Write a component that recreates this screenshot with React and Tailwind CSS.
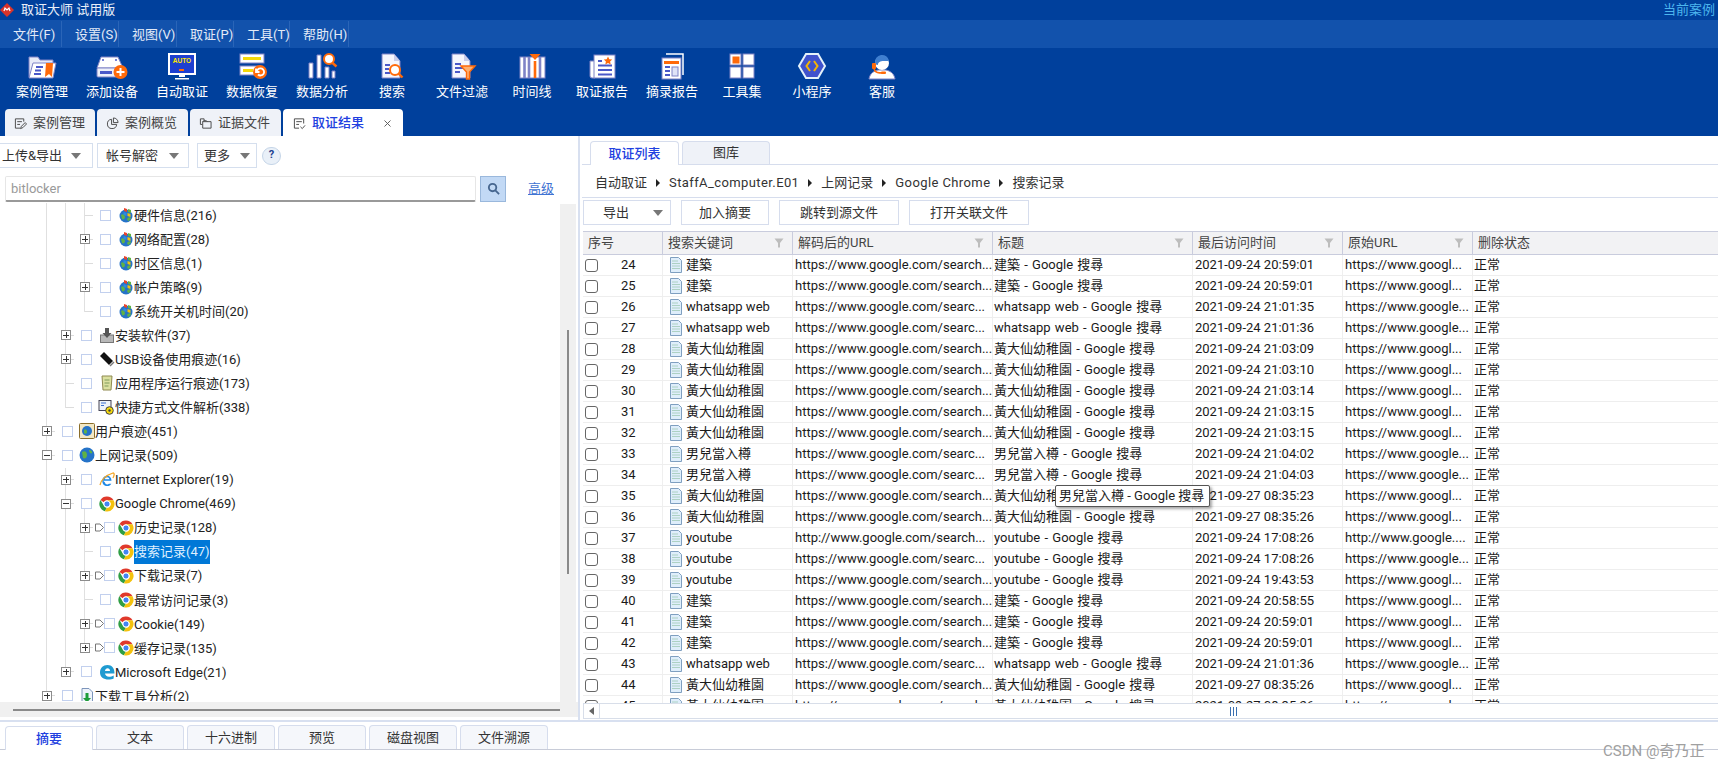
import {X} from 'lucide-react';

const BLUE = '#4a58c8';
const LINE = '#7f83c6';
const ORANGE = '#ff6a0a';

/* toolbar icons, drawn to roughly match the originals */
const toolIcons = {
  folder: (
    <>
      <path d="M3 4h9l2 3h13v17H3z" fill="#e8ebf8" stroke={LINE} />
      <path d="M7 10h23l-3 15H3z" fill="#fff" stroke={LINE} />
      <path d="M10 14h7M9 17.500h6M8 21h7" stroke={BLUE} strokeWidth="2" />
      <path d="M20 10h7l-1 14-3-3-4 3z" fill={ORANGE} />
    </>
  ),
  disk: (
    <>
      <path d="M5 4h17l5 11H1z" fill="#fff" stroke={LINE} />
      <rect x="1" y="15" width="24" height="9" rx="1" fill="#eef0fa" stroke={LINE} />
      <rect x="4" y="18" width="12" height="3" fill={BLUE} />
      <circle cx="7" cy="7" r="1" fill={BLUE} /><circle cx="20" cy="7" r="1" fill={BLUE} />
      <circle cx="24.500" cy="19" r="7" fill={ORANGE} />
      <path d="M24.500 15v8M20.500 19h8" stroke="#fff" strokeWidth="2" />
    </>
  ),
  auto: (
    <>
      <rect x="3" y="1" width="26" height="20" fill="#1d3fd0" stroke="#fff" strokeWidth="2" />
      <text x="16" y="10" textAnchor="middle" fontSize="6.500" fontWeight="700" fill="#ffe600" fontFamily="Liberation Sans, sans-serif">AUTO</text>
      <rect x="13" y="16" width="5" height="2" fill={ORANGE} />
      <path d="M13 22h6v2h-6zM9 25h14v1.500H9z" fill="#fff" />
    </>
  ),
  restore: (
    <>
      <rect x="4" y="1" width="24" height="9" fill="#fff" stroke={LINE} />
      <rect x="7" y="4" width="18" height="3" fill="#f5d90a" />
      <rect x="4" y="13" width="20" height="9" fill="#fff" stroke={LINE} />
      <rect x="7" y="16" width="10" height="3" fill="#f5d90a" />
      <circle cx="24" cy="19" r="7" fill={ORANGE} />
      <path d="M21 18a3.600 3.600 0 1 1 1 3.500M20 15.500v3.500h3.500" fill="none" stroke="#fff" strokeWidth="1.800" />
    </>
  ),
  analysis: (
    <>
      <path d="M3 10h4v15H3zM11 2h4v23h-4zM19 14h4v11h-4zM26 18h3v7h-3z" fill="#fff" stroke={LINE} />
      <circle cx="23" cy="6" r="5" fill="#fff" stroke={ORANGE} strokeWidth="2" />
      <path d="M26.500 10l4 3.500" stroke={ORANGE} strokeWidth="2.400" />
    </>
  ),
  searchDoc: (
    <>
      <path d="M6 1h12l6 7v17H6z" fill="#f5f6fd" stroke={LINE} />
      <path d="M18 1v7h6z" fill="#c9cdea" />
      <path d="M9 12h5M9 16h4M9 20h5" stroke={BLUE} strokeWidth="2" />
      <circle cx="19" cy="17" r="5" fill="#fff" stroke={ORANGE} strokeWidth="2" />
      <path d="M22.500 20.500l4 4" stroke={ORANGE} strokeWidth="2.400" />
    </>
  ),
  filterDoc: (
    <>
      <path d="M6 1h12l6 7v17H6z" fill="#f5f6fd" stroke={LINE} />
      <path d="M18 1v7h6z" fill="#c9cdea" />
      <path d="M9 11h6M9 15h9M9 19h5" stroke={BLUE} strokeWidth="2" />
      <path d="M15 13h14l-5.500 6v7h-3v-7z" fill="#ffb070" stroke={ORANGE} strokeWidth="1.400" />
    </>
  ),
  timeline: (
    <>
      <rect x="4" y="4" width="25" height="21" fill="#fff" stroke={LINE} />
      <path d="M8.500 4v21M13 4v21M24 4v21" stroke={LINE} strokeWidth="2.600" />
      <path d="M19 8v17" stroke={ORANGE} strokeWidth="2.600" />
      <path d="M13.500 1h11l-5.500 6z" fill={ORANGE} />
    </>
  ),
  report: (
    <>
      <path d="M4 8h5v17H6a2 2 0 0 1-2-2z" fill="#fff" stroke={LINE} />
      <rect x="8" y="2" width="21" height="23" fill="#fff" stroke={LINE} />
      <path d="M12 8h4M12 12.500h14M12 17h14M12 21.500h14" stroke={BLUE} strokeWidth="2" />
      <path d="M22 3.500l1.300 2.700 2.900.3-2.100 2 .6 2.900-2.700-1.400-2.700 1.400.6-2.900-2.100-2 2.900-.3z" fill={ORANGE} />
    </>
  ),
  extract: (
    <>
      <path d="M10 1h17v21" fill="none" stroke="#fff" strokeWidth="1.500" />
      <rect x="6" y="5" width="19" height="21" fill="#fff" stroke={LINE} />
      <rect x="8" y="8" width="15" height="3" fill={ORANGE} />
      <path d="M9 14h5M9 18h5M9 22h5" stroke={BLUE} strokeWidth="1.800" />
      <rect x="16" y="14" width="6" height="9" fill="#dfe3f7" stroke={LINE} />
    </>
  ),
  grid: (
    <>
      <rect x="4" y="1" width="11" height="11" fill="#fff" stroke={LINE} />
      <rect x="6.500" y="3.500" width="7" height="7" fill={ORANGE} />
      <rect x="17" y="1" width="11" height="11" fill="#fff" stroke={LINE} />
      <rect x="4" y="14" width="11" height="11" fill="#fff" stroke={LINE} />
      <rect x="17" y="14" width="11" height="11" fill="#fff" stroke={LINE} />
    </>
  ),
  hex: (
    <>
      <path d="M10 1h12l7 12-7 12H10L3 13z" fill="#3f52cc" stroke="#e4f2fa" strokeWidth="2" />
      <path d="M14 8l-3.500 5 3.500 5M18 8l3.500 5-3.500 5" fill="none" stroke="#f5b400" strokeWidth="2" />
    </>
  ),
  agent: (
    <>
      <path d="M3 26c1-6 5-8 9-9h8c4 1 8 3 9 9z" fill="#fff" stroke={LINE} />
      <circle cx="16" cy="10" r="7" fill="#fff" />
      <path d="M9 10a7 7 0 0 1 14-2c-4 0-10-1-11 3 0 1-1 2-3-1z" fill="#3f7fd0" />
      <rect x="6" y="10" width="4" height="6" rx="1" fill={ORANGE} />
      <path d="M8 16c1 4 5 4 9 4" fill="none" stroke={ORANGE} strokeWidth="1.500" />
      <rect x="15" y="18.500" width="5" height="2.500" rx="1" fill={ORANGE} />
    </>
  ),
};

const tools = [
  ['folder', '案例管理'], ['disk', '添加设备'], ['auto', '自动取证'], ['restore', '数据恢复'],
  ['analysis', '数据分析'], ['searchDoc', '搜索'], ['filterDoc', '文件过滤'], ['timeline', '时间线'],
  ['report', '取证报告'], ['extract', '摘录报告'], ['grid', '工具集'], ['hex', '小程序'], ['agent', '客服'],
];

const menus = [
  ['文件(F)', 'w-[62px]'], ['设置(S)', 'w-[57px]'], ['视图(V)', 'w-[58px]'],
  ['取证(P)', 'w-[57px]'], ['工具(T)', 'w-[56px]'], ['帮助(H)', 'w-[59px]'],
];

function ChromeIcon() {
  return (
    <svg viewBox="0 0 16 16" className="w-4 h-4 shrink-0">
      <path d="M8 0.500a7.500 7.500 0 0 1 6.500 3.750H8a3.750 3.750 0 0 0-3.250 1.900L1.500 3.900A7.500 7.500 0 0 1 8 0.500z" fill="#e0392b" />
      <path d="M1.500 3.900l3.250 5.600A3.750 3.750 0 0 0 8 11.750l-2.200 3.400A7.500 7.500 0 0 1 1.500 3.900z" fill="#2f9e44" />
      <path d="M14.500 4.250A7.500 7.500 0 0 1 5.800 15.150L8 11.750a3.750 3.750 0 0 0 3.250-5.600L8 4.250z" fill="#f4c20d" />
      <circle cx="8" cy="8" r="3.100" fill="#4285f4" stroke="#fff" />
    </svg>
  );
}

function WinGlobe() {
  return (
    <svg viewBox="0 0 16 16" className="w-4 h-4 shrink-0">
      <circle cx="8" cy="9" r="6.500" fill="#2573c8" />
      <path d="M3 8c2-2 4 0 4 2s-2 3-3 2zM9 12c1-2 4-2 4-1s-2 3-3 3z" fill="#5fb246" />
      <path d="M6 1l3 1v3L6 4z" fill="#e8452c" /><path d="M10 2l3 1v3l-3-1z" fill="#5fb246" />
      <path d="M5.500 5l3 1v3l-3-1z" fill="#2f8be0" /><path d="M9.500 6l3 1v3l-3-1z" fill="#f4c20d" />
    </svg>
  );
}

function treeIcon(kind) {
  switch (kind) {
    case 'win': return <WinGlobe />;
    case 'chrome': return <ChromeIcon />;
    case 'install':
      return (
        <svg viewBox="0 0 16 16" className="w-4 h-4 shrink-0">
          <rect x="1.500" y="8" width="13" height="7.500" fill="#b8b8b8" stroke="#777" />
          <path d="M6 1h4v5h2.500L8 11 3.500 6H6z" fill="#555" />
        </svg>
      );
    case 'usb':
      return (
        <svg viewBox="0 0 16 16" className="w-4 h-4 shrink-0">
          <path d="M1 5l4-4 9 9-4 4z" fill="#111" />
          <path d="M10.500 14.500l4-4 1 1-4 4z" fill="#777" />
        </svg>
      );
    case 'app':
      return (
        <svg viewBox="0 0 16 16" className="w-4 h-4 shrink-0">
          <path d="M3 1h10l-1 14H4z" fill="#dbe0a0" stroke="#8f8a50" />
          <path d="M5.500 5h5M5.500 8h5M5.500 11h4" stroke="#7f9a5a" />
        </svg>
      );
    case 'shortcut':
      return (
        <svg viewBox="0 0 16 16" className="w-[17px] h-4 shrink-0">
          <rect x="0.500" y="1.500" width="12" height="10" fill="#eef2f8" stroke="#445" />
          <path d="M2.500 4h5M2.500 6.500h3" stroke="#3a6fd0" />
          <circle cx="11" cy="11.500" r="3.800" fill="#f5d90a" stroke="#444" />
          <circle cx="11" cy="11.500" r="1.200" fill="#444" />
        </svg>
      );
    case 'user':
      return (
        <svg viewBox="0 0 16 16" className="w-4 h-4 shrink-0">
          <rect x="0.500" y="0.500" width="15" height="15" rx="1" fill="#f2e7c4" stroke="#8a6d2a" />
          <circle cx="8" cy="8" r="5" fill="#2573c8" />
          <path d="M5 7c2-2 3 0 3 2s-2 2-3 1z" fill="#5fb246" />
        </svg>
      );
    case 'globe':
      return (
        <svg viewBox="0 0 16 16" className="w-4 h-4 shrink-0">
          <circle cx="8" cy="8" r="7.500" fill="#2573c8" />
          <path d="M3 5c3-2 5 0 5 3s-2 4-4 3zM10 3c2 0 4 2 3 3s-3 0-3-3z" fill="#5fb246" />
        </svg>
      );
    case 'ie':
      return (
        <svg viewBox="0 0 16 16" className="w-4 h-4 shrink-0">
          <path d="M4 8.800h8.500c0-3-1.800-5-4.300-5C5.400 3.800 3.300 6 3.300 9c0 3 2 5 4.900 5 1.900 0 3.300-.8 4.100-2.300H9.900c-.4.500-1 .8-1.700.8-1.300 0-2.200-1-2.400-2.200M5.800 7.200c.2-1.100 1.200-1.900 2.400-1.900s2.100.8 2.300 1.900z" fill="#1e88e5" fillRule="evenodd" />
          <path d="M1 13C2 8 7 3 14 1c2 0 1 3 0 5" fill="none" stroke="#f5a623" strokeWidth="1.300" />
        </svg>
      );
    case 'edge':
      return (
        <svg viewBox="0 0 16 16" className="w-4 h-4 shrink-0">
          <path d="M1 8.500C1 4 4 1 8.500 1 13 1 15.500 4 15.500 9.500H6c.2 2 1.800 3.200 4 3.200 1.800 0 3.300-.5 4.700-1.300v3.100c-1.500.8-3.200 1.100-5 1.100C4.500 15.600 1 13 1 8.500zM6 7h5c0-1.600-1-2.700-2.400-2.700C7.200 4.300 6.200 5.400 6 7z" fill="#1f9bd1" fillRule="evenodd" />
        </svg>
      );
    case 'download':
      return (
        <svg viewBox="0 0 16 16" className="w-4 h-4 shrink-0">
          <path d="M3 0.500h7l3.500 3.500v11.500H3z" fill="#eef3fb" stroke="#7d95bb" />
          <path d="M6.500 5h3v5H12l-4 4.500L4 10h2.500z" fill="#1f9d3a" />
        </svg>
      );
    default: return null;
  }
}

function PlusBox({minus}) {
  return (
    <span className="relative w-[10px] h-[10px] border border-[#8c8c8c] bg-white shrink-0 flex items-center justify-center">
      <span className="w-[6px] h-px bg-[#333]" />
      {!minus && <span className="absolute w-px h-[6px] bg-[#333]" />}
    </span>
  );
}

/* level: indent depth, exp: none / plus / minus, tri: hollow arrow before the checkbox */
const treeRows = [
  {level: 2, icon: 'win', label: '硬件信息(216)'},
  {level: 2, icon: 'win', label: '网络配置(28)', exp: 'plus'},
  {level: 2, icon: 'win', label: '时区信息(1)'},
  {level: 2, icon: 'win', label: '帐户策略(9)', exp: 'plus'},
  {level: 2, icon: 'win', label: '系统开关机时间(20)'},
  {level: 1, icon: 'install', label: '安装软件(37)', exp: 'plus'},
  {level: 1, icon: 'usb', label: 'USB设备使用痕迹(16)', exp: 'plus'},
  {level: 1, icon: 'app', label: '应用程序运行痕迹(173)'},
  {level: 1, icon: 'shortcut', label: '快捷方式文件解析(338)'},
  {level: 0, icon: 'user', label: '用户痕迹(451)', exp: 'plus'},
  {level: 0, icon: 'globe', label: '上网记录(509)', exp: 'minus'},
  {level: 1, icon: 'ie', label: 'Internet Explorer(19)', exp: 'plus'},
  {level: 1, icon: 'chrome', label: 'Google Chrome(469)', exp: 'minus'},
  {level: 2, icon: 'chrome', label: '历史记录(128)', exp: 'plus', tri: true},
  {level: 2, icon: 'chrome', label: '搜索记录(47)', selected: true},
  {level: 2, icon: 'chrome', label: '下载记录(7)', exp: 'plus', tri: true},
  {level: 2, icon: 'chrome', label: '最常访问记录(3)'},
  {level: 2, icon: 'chrome', label: 'Cookie(149)', exp: 'plus', tri: true},
  {level: 2, icon: 'chrome', label: '缓存记录(135)', exp: 'plus', tri: true},
  {level: 1, icon: 'edge', label: 'Microsoft Edge(21)', exp: 'plus'},
  {level: 0, icon: 'download', label: '下载工具分析(2)', exp: 'plus'},
];

const indentClass = ['w-[42px]', 'w-[61px]', 'w-[80px]'];

function TreeRow({row}) {
  return (
    <div className="flex items-center h-[24.05px] relative">
      <span className={`${indentClass[row.level]} shrink-0`} />
      <span className="w-[10px] shrink-0 flex items-center">
        {row.exp ? <PlusBox minus={row.exp === 'minus'} /> : <span className="w-[8px] h-px bg-[#dcdcdc] ml-[5px] shrink-0" />}
      </span>
      {row.exp && <span className="w-[3px] h-px bg-[#dcdcdc] shrink-0" />}
      {row.tri ? (
        <>
          <svg viewBox="0 0 9 9" className="w-[9px] h-[9px] ml-[2px] shrink-0">
            <path d="M0.500 1h4.500l3.500 3.500-3.500 3.500H0.500z" fill="#fff" stroke="#777" />
          </svg>
          <span className="w-[11px] h-[11px] border border-[#c2d0ee] bg-white shrink-0" />
        </>
      ) : (
        <span className={`w-[11px] h-[11px] border border-[#c2d0ee] bg-white shrink-0 ${row.exp ? 'ml-[7px]' : 'ml-[10px]'}`} />
      )}
      <span className={`flex items-center justify-center shrink-0 w-[17px] ${row.tri ? 'ml-[2px]' : row.level === 0 ? 'ml-[5px]' : 'ml-[6px]'}`}>{treeIcon(row.icon)}</span>
      <span className={`whitespace-nowrap h-6 pt-px flex items-center text-[13px] ${row.selected ? 'bg-[#0078d7] text-[#dff0ff]' : 'text-[#222]'}`}>{row.label}</span>
    </div>
  );
}

function FilterMark() {
  return (
    <svg viewBox="0 0 10 10" className="w-[10px] h-[10px] shrink-0">
      <path d="M0.500 0.500h9L6 5v4.500H4V5z" fill="#bdbdbd" />
    </svg>
  );
}

function DocIcon() {
  return (
    <svg viewBox="0 0 14 16" className="w-[14px] h-[16px] shrink-0">
      <path d="M1.500 0.500h8l3 3v12h-11z" fill="#dfeefb" stroke="#7f9fc0" />
      <path d="M3.500 4h5M3.500 6.500h7M3.500 9h7M3.500 11.500h7" stroke="#7ab48a" strokeDasharray="1 1" />
    </svg>
  );
}

const columns = [
  {title: '序号', w: 'w-[80px]'},
  {title: '搜索关键词', w: 'w-[130px]', filter: true},
  {title: '解码后的URL', w: 'w-[200px]', filter: true},
  {title: '标题', w: 'w-[200px]', filter: true},
  {title: '最后访问时间', w: 'w-[150px]', filter: true},
  {title: '原始URL', w: 'w-[130px]', filter: true},
  {title: '删除状态', w: 'flex-1'},
];

const S = 'https://www.google.com/search...';
const C = 'https://www.google.com/searc...';
const G = 'https://www.googl...';
const E = 'https://www.google...';
const records = [
  [24, '建築', S, '建築 - Google 搜尋', '2021-09-24 20:59:01', G],
  [25, '建築', S, '建築 - Google 搜尋', '2021-09-24 20:59:01', G],
  [26, 'whatsapp web', C, 'whatsapp web - Google 搜尋', '2021-09-24 21:01:35', E],
  [27, 'whatsapp web', C, 'whatsapp web - Google 搜尋', '2021-09-24 21:01:36', E],
  [28, '黃大仙幼稚園', S, '黃大仙幼稚園 - Google 搜尋', '2021-09-24 21:03:09', G],
  [29, '黃大仙幼稚園', S, '黃大仙幼稚園 - Google 搜尋', '2021-09-24 21:03:10', G],
  [30, '黃大仙幼稚園', S, '黃大仙幼稚園 - Google 搜尋', '2021-09-24 21:03:14', G],
  [31, '黃大仙幼稚園', S, '黃大仙幼稚園 - Google 搜尋', '2021-09-24 21:03:15', G],
  [32, '黃大仙幼稚園', S, '黃大仙幼稚園 - Google 搜尋', '2021-09-24 21:03:15', G],
  [33, '男兒當入樽', C, '男兒當入樽 - Google 搜尋', '2021-09-24 21:04:02', E],
  [34, '男兒當入樽', C, '男兒當入樽 - Google 搜尋', '2021-09-24 21:04:03', E],
  [35, '黃大仙幼稚園', S, '黃大仙幼稚園 - Google 搜尋', '2021-09-27 08:35:23', G],
  [36, '黃大仙幼稚園', S, '黃大仙幼稚園 - Google 搜尋', '2021-09-27 08:35:26', G],
  [37, 'youtube', 'http://www.google.com/search...', 'youtube - Google 搜尋', '2021-09-24 17:08:26', 'http://www.google....'],
  [38, 'youtube', C, 'youtube - Google 搜尋', '2021-09-24 17:08:26', E],
  [39, 'youtube', S, 'youtube - Google 搜尋', '2021-09-24 19:43:53', G],
  [40, '建築', S, '建築 - Google 搜尋', '2021-09-24 20:58:55', G],
  [41, '建築', S, '建築 - Google 搜尋', '2021-09-24 20:59:01', G],
  [42, '建築', S, '建築 - Google 搜尋', '2021-09-24 20:59:01', G],
  [43, 'whatsapp web', C, 'whatsapp web - Google 搜尋', '2021-09-24 21:01:36', E],
  [44, '黃大仙幼稚園', S, '黃大仙幼稚園 - Google 搜尋', '2021-09-27 08:35:26', G],
  [45, '黃大仙幼稚園', S, '黃大仙幼稚園 - Google 搜尋', '2021-09-27 08:35:26', G],
];

function RecordRow({r}) {
  const cell = 'h-full border-r border-[#efefef] flex items-center whitespace-nowrap overflow-hidden shrink-0';
  return (
    <div className="flex h-[21px] border-b border-[#eeeeee] text-[13px] text-[#1a1a1a] shrink-0">
      <div className={`${cell} w-[80px] pl-[2px]`}>
        <span className="w-[13px] h-[13px] rounded-[3px] border border-[#666] bg-white shrink-0" />
        <span className="ml-[23px]">{r[0]}</span>
      </div>
      <div className={`${cell} w-[130px] pl-[6px]`}>
        <DocIcon />
        <span className="ml-[3px]">{r[1]}</span>
      </div>
      <div className={`${cell} w-[200px] pl-[2px]`}>{r[2]}</div>
      <div className={`${cell} w-[200px] pl-[1px] [word-spacing:1px]`}>{r[3]}</div>
      <div className={`${cell} w-[150px] pl-[2px]`}>{r[4]}</div>
      <div className={`${cell} w-[130px] pl-[2px]`}>{r[5]}</div>
      <div className="flex items-center pl-[1px]">正常</div>
    </div>
  );
}

function Caret({className = ''}) {
  return <span className={`w-0 h-0 border-x-[5px] border-x-transparent border-t-[6px] border-t-[#777] shrink-0 ${className}`} />;
}

const bottomTabs = ['摘要', '文本', '十六进制', '预览', '磁盘视图', '文件溯源'];

export default function App() {
  return (
    <div className="w-[1718px] h-[766px] overflow-hidden bg-white flex flex-col relative [font-family:'Roboto','Noto_Sans_CJK_SC',sans-serif]">
      {/* Title bar */}
      <div className="h-5 bg-[#00409c] flex items-center justify-between shrink-0">
        <div className="flex items-center">
          <svg viewBox="0 0 14 14" className="w-[14px] h-[14px]">
            <path d="M7 0l7 7-7 7-7-7z" fill="#d8332a" />
            <path d="M4 8l1-3 2 2 2-2 1 3" fill="none" stroke="#fff" strokeWidth="1.200" />
          </svg>
          <span className="ml-[7px] text-[13px] leading-5 text-[#e8eef8]">取证大师 试用版</span>
        </div>
        <span className="mr-[3px] text-[13px] leading-5 text-[#4cb6ee]">当前案例</span>
      </div>

      {/* Menu */}
      <div className="h-7 bg-[#1252ac] flex shrink-0 items-center">
        {menus.map(([text, w]) => (
          <div key={text} className={`${w} h-[26px] pl-[13px] pt-px border-r border-[#2a65b8] flex items-center text-[13px] text-[#e2eaf7] whitespace-nowrap`}>
            {text}
          </div>
        ))}
      </div>

      {/* Toolbar */}
      <div className="h-[61px] bg-[#00409c] flex pl-[7px] pt-[5px] shrink-0">
        {tools.map(([icon, label]) => (
          <div key={label} className="w-[70px] flex flex-col items-center">
            <svg viewBox="0 0 32 28" className="w-8 h-7">{toolIcons[icon]}</svg>
            <span className="mt-[2px] text-[13px] leading-[18px] text-white whitespace-nowrap">{label}</span>
          </div>
        ))}
      </div>

      {/* Page tabs */}
      <div className="h-[27px] bg-[#00409c] flex items-end pl-[5px] gap-[2px] shrink-0 text-[13px]">
        {[['案例管理', 'w-[90px]', 'edit'], ['案例概览', 'w-[91px]', 'pie'], ['证据文件', 'w-[91px]', 'files']].map(([text, w, kind]) => (
          <div key={text} className={`${w} h-[27px] pt-px bg-[#eff2f8] rounded-t-[4px] flex items-center pl-[9px] text-[#444]`}>
            <svg viewBox="0 0 14 14" className="w-[13px] h-[13px] mr-[6px]" fill="none" stroke="#444">
              {kind === 'edit' && <path d="M1.500 2h9v3M1.500 2v10h5M3.500 5h5M3.500 8h3M7 12.500l1-2.500 4-4 1.500 1.500-4 4z" />}
              {kind === 'pie' && <path d="M6 2.500a5 5 0 1 0 5.500 5.500H6zM8 1a5 5 0 0 1 5 5H8z" />}
              {kind === 'files' && <path d="M1.500 2h4v2M1.500 2v6h2M4 5h9v7H4zM4 5l1-1h3l1 1" />}
            </svg>
            {text}
          </div>
        ))}
        <div className="w-[120px] h-[27px] pt-px bg-white rounded-t-[4px] flex items-center pl-[10px] text-[#2140e0] font-medium">
          <svg viewBox="0 0 14 14" className="w-[13px] h-[13px] mr-[6px]" fill="none" stroke="#444">
            <path d="M1.500 2h10v5M1.500 2v10h5M3.500 5h6M3.500 8h3M8 10.500l2 2 3-3.500" />
          </svg>
          取证结果
          <X className="w-[11px] h-[11px] ml-[18px] text-[#555]" strokeWidth={2} />
        </div>
      </div>

      {/* Main */}
      <div className="h-[584px] flex shrink-0">
        {/* Left panel */}
        <div className="w-[578px] flex flex-col shrink-0 text-[13px]">
          <div className="flex items-center pt-[7px] h-[32px] shrink-0 text-[#333]">
            <div className="w-[93px] h-[25px] pt-px border border-l-0 border-[#d5dfee] flex items-center pl-[2px] whitespace-nowrap">
              上传&导出<Caret className="ml-[9px]" />
            </div>
            <div className="w-[92px] h-[25px] pt-px ml-[4px] border border-[#d5dfee] flex items-center pl-[8px] whitespace-nowrap">
              帐号解密<Caret className="ml-[11px]" />
            </div>
            <div className="w-[60px] h-[25px] pt-px ml-[8px] border border-[#d5dfee] flex items-center pl-[6px] whitespace-nowrap">
              更多<Caret className="ml-[10px]" />
            </div>
            <div className="w-[19px] h-[18px] ml-[5px] rounded-full bg-[#e9f0f8] border border-[#c5d5e8] flex items-center justify-center text-[11px] font-bold text-[#1d3f8f]">?</div>
          </div>
          <div className="flex items-center pl-[5px] mt-[7px] h-[27px] shrink-0">
            <div className="w-[471px] h-[26px] pt-px border border-[#e6e6e6] border-b-2 border-b-[#999] rounded-[2px] flex items-center pl-[5px] text-[#9a9a9a]">bitlocker</div>
            <div className="w-[26px] h-[26px] ml-[4px] bg-[#c2d9f5] border border-[#9ab8dc] flex items-center justify-center">
              <svg viewBox="0 0 14 14" className="w-[13px] h-[13px]" fill="none" stroke="#46668f" strokeWidth="2">
                <circle cx="6" cy="6" r="4" /><path d="M9 9l4 4" />
              </svg>
            </div>
            <span className="ml-[22px] text-[#3f73d2] underline">高级</span>
          </div>
          <div className="h-[498px] mt-[1px] flex shrink-0">
            {/* Tree */}
            <div className="w-[560px] h-full relative overflow-hidden shrink-0">
              <span className="absolute left-[46px] top-0 bottom-0 w-px bg-[#e0e0e0]" />
              <span className="absolute left-[65px] top-0 h-[205px] w-px bg-[#e0e0e0]" />
              <span className="absolute left-[84px] top-0 h-[109px] w-px bg-[#e0e0e0]" />
              <span className="absolute left-[65px] top-[265px] h-[204px] w-px bg-[#e0e0e0]" />
              <span className="absolute left-[84px] top-[306px] h-[140px] w-px bg-[#e0e0e0]" />
              {treeRows.map((row) => <TreeRow key={row.label} row={row} />)}
            </div>
            {/* Vertical scrollbar */}
            <div className="w-4 h-full bg-[#f0f0f0] mt-[1px] flex justify-center shrink-0">
              <span className="w-[2px] h-[244px] mt-[126px] bg-[#8a8a8a]" />
            </div>
          </div>
          {/* Horizontal scrollbar */}
          <div className="h-[15px] mt-[1px] bg-[#f0f0f0] flex items-center pl-[13px] shrink-0">
            <span className="w-[547px] h-[2px] bg-[#8a8a8a]" />
          </div>
        </div>

        {/* Splitter */}
        <div className="w-[2px] bg-[#d8e0f0] shrink-0" />

        {/* Right panel */}
        <div className="flex-1 min-w-0 pl-[2px] flex flex-col text-[13px] text-[#333]">
          <div className="h-[29px] pt-[5px] border-b border-[#d6dded] flex items-end pl-[8px] gap-[3px] shrink-0">
            <div className="w-[89px] h-[24px] bg-white border border-b-0 border-[#d6dded] rounded-t-[4px] flex items-center justify-center text-[#2140e0] font-medium translate-y-px">取证列表</div>
            <div className="w-[88px] h-[23px] bg-[#eff2f8] border border-b-0 border-[#d6dded] rounded-t-[4px] flex items-center justify-center">图库</div>
          </div>
          <div className="h-[33px] pt-[3px] border-b border-[#d6dded] flex items-center pl-[13px] shrink-0">
            {['自动取证', 'StaffA_computer.E01', '上网记录', 'Google Chrome', '搜索记录'].map((t, i) => (
              <span key={t} className="flex items-center">
                {i > 0 && <span className="w-0 h-0 mx-[9px] border-y-[4px] border-y-transparent border-l-[4px] border-l-[#222]" />}
                <span className={i === 1 || i === 3 ? 'tracking-[0.4px]' : ''}>{t}</span>
              </span>
            ))}
          </div>
          <div className="flex gap-[10px] pl-[1px] pt-[2px] h-[33px] shrink-0">
            <div className="w-[88px] h-[25px] border border-[#d6dded] flex items-center pl-[19px]">
              导出<Caret className="ml-[24px]" />
            </div>
            <div className="w-[88px] h-[25px] border border-[#d6dded] flex items-center justify-center">加入摘要</div>
            <div className="w-[120px] h-[25px] border border-[#d6dded] flex items-center justify-center">跳转到源文件</div>
            <div className="w-[120px] h-[25px] border border-[#d6dded] flex items-center justify-center">打开关联文件</div>
          </div>

          {/* Table header */}
          <div className="h-[24px] ml-[1px] bg-[#f2f2f4] border-y border-[#c9ccdd] flex shrink-0 text-[#444]">
            {columns.map((c) => (
              <div key={c.title} className={`${c.w} ${c.filter ? 'pr-[8px]' : ''} h-full pb-px border-r border-[#c9ccdd] last:border-r-0 pl-[5px] flex items-center justify-between whitespace-nowrap`}>
                <span>{c.title}</span>
                {c.filter && <FilterMark />}
              </div>
            ))}
          </div>

          {/* Table body */}
          <div className="h-[448px] ml-[1px] overflow-hidden flex flex-col shrink-0">
            {records.map((r) => <RecordRow key={r[0]} r={r} />)}
          </div>

          {/* Table scrollbar */}
          <div className="h-[16px] ml-[1px] border-y border-[#d8dee9] flex items-center shrink-0">
            <div className="w-[17px] h-full border-x border-[#d8dee9] flex items-center justify-center shrink-0">
              <span className="w-0 h-0 border-y-[4px] border-y-transparent border-r-[5px] border-r-[#666]" />
            </div>
            <div className="flex-1 flex justify-center gap-[2px] pl-[148px]">
              <span className="w-px h-[9px] bg-[#3a6fb0]" />
              <span className="w-px h-[9px] bg-[#3a6fb0]" />
              <span className="w-px h-[9px] bg-[#3a6fb0]" />
            </div>
          </div>
        </div>
      </div>

      {/* Bottom tabs */}
      <div className="h-[2px] bg-[#d8e0f0] shrink-0" />
      <div className="h-[28px] border-b border-[#c8ccd8] flex items-end pl-[5px] gap-[3px] shrink-0 text-[13px] text-[#333]">
        {bottomTabs.map((t, i) => (
          <div
            key={t}
            className={`w-[88px] h-[24px] border border-b-0 border-[#d6dded] rounded-t-[4px] flex items-center justify-center ${i === 0 ? 'bg-white text-[#2140e0] font-medium translate-y-px' : 'bg-[#f5f7fb]'}`}
          >
            {t}
          </div>
        ))}
      </div>
      <div className="flex-1 bg-white" />

      {/* Hover tooltip */}
      <div className="absolute left-[1055px] top-[485px] w-[155px] h-[22px] pl-[3px] bg-white border border-[#555] rounded-[2px] shadow-[2px_2px_3px_rgba(0,0,0,0.35)] flex items-center text-[13px] text-[#222] whitespace-nowrap">
        男兒當入樽 - Google 搜尋
      </div>

      {/* Watermark */}
      <span className="absolute left-[1603px] top-[741px] text-[15px] leading-5 text-[#a0a0a0] whitespace-nowrap">CSDN @奇乃正</span>
    </div>
  );
}
